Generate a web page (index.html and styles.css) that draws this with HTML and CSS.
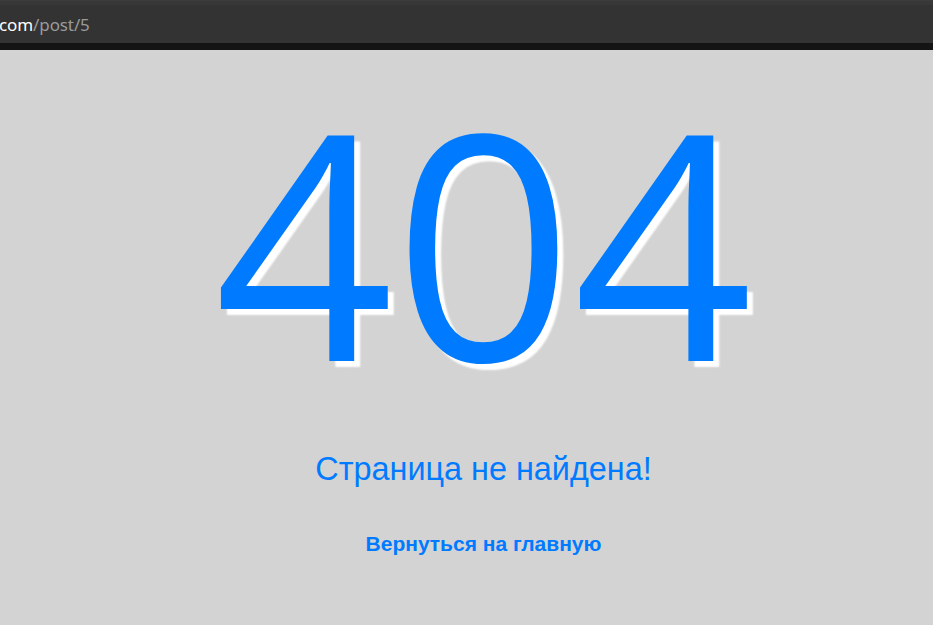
FILE: index.html
```html
<!DOCTYPE html>
<html lang="ru">
<head>
<meta charset="utf-8">
<title>404</title>
<link rel="stylesheet" href="styles.css">
</head>
<body>
<header class="browser-bar">
  <div class="address"><span class="host">com</span><span class="path">/post/5</span></div>
</header>
<main class="notfound">
  <h1 class="code">404</h1>
  <p class="message">Страница не найдена!</p>
  <a class="home-link" href="#">Вернуться на главную</a>
</main>
</body>
</html>
```

FILE: styles.css
```css
html, body {
  margin: 0;
  padding: 0;
}
body {
  background: #d3d3d3;
  height: 625px;
  overflow: hidden;
}
.browser-bar {
  height: 43px;
  background: #333333;
  border-top: 1px solid #3c3c3c;
  box-sizing: border-box;
  display: flex;
  align-items: center;
  box-shadow: inset 0 4px 0 #383838;
}
.notfound {
  border-top: 7px solid #141414;
  display: flex;
  flex-direction: column;
  align-items: center;
  padding-left: 34px;
  font-family: "Liberation Sans", Arial, sans-serif;
  color: #007bff;
}
.address {
  font-family: "Noto Sans", "DejaVu Sans", sans-serif;
  font-size: 17px;
  margin-left: -1px;
  margin-top: 4px;
  letter-spacing: -0.1px;
}
.host {
  color: #ffffff;
}
.path {
  color: #9a9a9a;
}
.code {
  font-family: "Open Sans", "Noto Sans", sans-serif;
  font-weight: 400;
  font-size: 314px;
  line-height: 1;
  margin: 32px 0 0 0;
  color: #007bff;
  text-shadow: 6px 6px 2px #ffffff;
}
.message {
  font-size: 32.4px;
  line-height: 1;
  margin: 57px 0 0 0;
}
.home-link {
  font-size: 21px;
  font-weight: 700;
  line-height: 1;
  margin-top: 48px;
  color: #007bff;
  text-decoration: none;
}
```
